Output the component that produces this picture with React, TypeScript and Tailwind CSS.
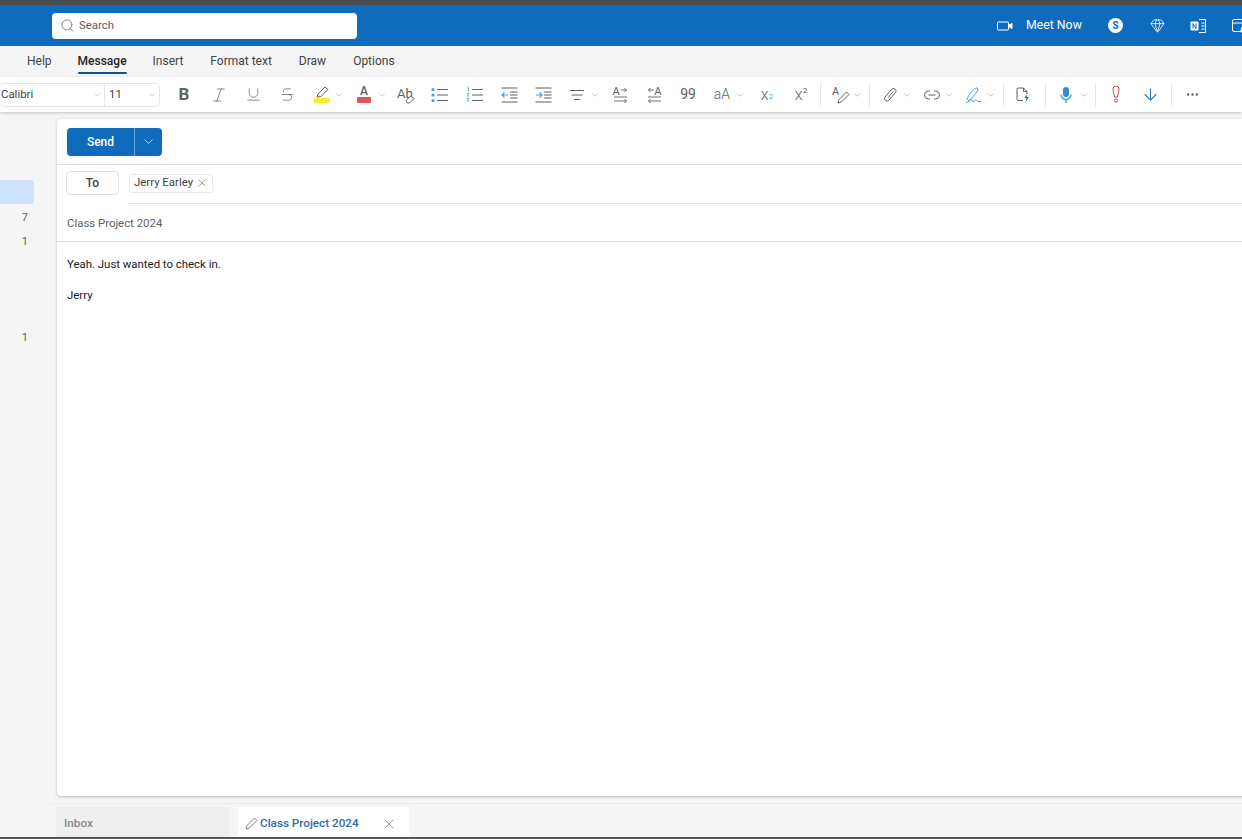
import type { ReactNode } from 'react';
import { ArrowDown, ChevronDown, Ellipsis, Gem, Italic, Search, Strikethrough, Underline, X } from 'lucide-react';

const GREY = '#616161';
const ACCENT = '#4f9fd4';

// one toolbar slot, the width and left margin come in through className
const Slot = ({ className, children }: { className: string; children: ReactNode }) => (
  <div className={`flex h-full shrink-0 items-center justify-center text-[#616161] ${className}`}>{children}</div>
);

const Chev = ({ className }: { className: string }) => (
  <Slot className={`w-[8px] ${className}`}>
    <ChevronDown size={10} strokeWidth={1.2} className="shrink-0 text-[#8a8a8a]" />
  </Slot>
);

const Divider = ({ className }: { className: string }) => (
  <div className={`h-[24px] w-px shrink-0 bg-[#e6e6e6] ${className}`} />
);

const BulletList = () => (
  <svg width="18" height="16" viewBox="0 0 18 16" fill="none">
    <circle cx="2" cy="2.5" r="1.6" fill={ACCENT} />
    <circle cx="2" cy="8" r="1.6" fill={ACCENT} />
    <circle cx="2" cy="13.5" r="1.6" fill={ACCENT} />
    <path d="M6 2.5h11M6 8h11M6 13.5h11" stroke={GREY} />
  </svg>
);

const NumberList = () => (
  <svg width="18" height="16" viewBox="0 0 18 16" fill="none">
    <path d="M1.5 1l1-.5V4M1 6.5h2L1 9h2.2M1 11.5h2l-1 1.2 1 1.2H1" stroke={ACCENT} strokeWidth="0.8" />
    <path d="M6 2.5h11M6 8h11M6 13.5h11" stroke={GREY} />
  </svg>
);

const Indent = ({ flip }: { flip?: boolean }) => (
  <svg width="17" height="16" viewBox="0 0 17 16" fill="none">
    <path d="M.5 1h16M.5 15h16M9 5h7.500M9 8h7.500M9 11h7.500" stroke={GREY} />
    <path d={flip ? 'M1 8h6M4.500 5.500 7 8l-2.500 2.500' : 'M7 8H1M3.500 5.500 1 8l2.500 2.500'} stroke={ACCENT} strokeWidth="1.2" />
  </svg>
);

const Spacing = () => (
  <svg width="16" height="12" viewBox="0 0 16 12" fill="none">
    <path d="M1 1.500h14M2.500 6h11M5 10.500h6" stroke={GREY} />
  </svg>
);

const Direction = ({ rtl }: { rtl?: boolean }) => (
  <div className="relative flex h-[16px] w-[15px] flex-col items-center">
    <span className={`text-[11px] leading-[10px] ${rtl ? 'self-end' : 'self-start'}`}>A</span>
    <svg width="15" height="16" viewBox="0 0 15 16" fill="none" className="absolute left-0 top-0">
      {rtl ? (
        <path d="M7 3H1.500M3.500 1 1.500 3l2 2M1 10h13M14 14H1.500M3.500 12l-2 2 2 2" stroke={GREY} strokeWidth="0.9" />
      ) : (
        <path d="M8 3h5.500M11.500 1l2 2-2 2M1 10h13M1 14h12.500M11.500 12l2 2-2 2" stroke={GREY} strokeWidth="0.9" />
      )}
    </svg>
  </div>
);

const Proof = () => (
  <div className="relative h-[18px] w-[18px]">
    <span className="text-[13px] leading-[15px]">Ab</span>
    <svg width="10" height="9" viewBox="0 0 10 9" fill="none" className="absolute bottom-0 right-0">
      <path d="M1 5.500 5.500 1 9 3.500 4.500 8H2.500z" stroke={GREY} fill="#fff" />
    </svg>
  </div>
);

const StylePen = () => (
  <div className="relative h-[18px] w-[18px]">
    <span className="block text-[11px] leading-[12px]">A</span>
    <svg width="13" height="13" viewBox="0 0 13 13" fill="none" className="absolute bottom-0 right-0">
      <path d="M1 12l1-3.500L9.500 1 12 3.500 4.500 11z" stroke={GREY} />
    </svg>
  </div>
);

const Clip = () => (
  <svg width="14" height="15" viewBox="0 0 14 15" fill="none">
    <path d="M5.500 10.500 10 4.500M3 9l5.500-6.500a2.500 2.500 0 0 1 4 3L6 13a2.500 2.500 0 0 1-4-3l1-1" stroke={GREY} />
  </svg>
);

const Signature = () => (
  <svg width="18" height="18" viewBox="0 0 18 18" fill="none">
    <path d="M2 14c0-3 6-11 9-12 2-.5 2.500 1.500 1 3.500-2 3-6 8-9 9.500M1 16.500c3 0 3-3 5-3 1.500 0 .5 2 2 2s2-1.500 3-1.500 1 1.500 3 1.500h2" stroke={ACCENT} />
  </svg>
);

const Flash = () => (
  <svg width="14" height="16" viewBox="0 0 14 16" fill="none">
    <path d="M7 13.500H2A1 1 0 0 1 1 12.500V2a1 1 0 0 1 1-1h5.500L11 4.500V7M7.500 1v3.500H11" stroke={GREY} />
    <path d="M11 7.500l-2.500 3.500H10.500l-1 4 3.500-5h-2.200z" fill="#0f6cbd" />
  </svg>
);

const Mic = () => (
  <svg width="14" height="18" viewBox="0 0 14 18" fill="none">
    <rect x="4" y="1" width="6" height="10" rx="3" fill="#2f8fd0" />
    <path d="M2 8.500a5 5 0 0 0 10 0M7 13.500V17" stroke="#2f8fd0" strokeWidth="1.2" />
  </svg>
);

const Important = () => (
  <svg width="10" height="18" viewBox="0 0 10 18" fill="none">
    <path d="M2 3a3 3 0 0 1 6 0c0 2-1 5-1.500 8h-3C3 8 2 5 2 3z" stroke="#c4474f" />
    <circle cx="5" cy="14.500" r="1.600" stroke="#c4474f" />
  </svg>
);

const Video = () => (
  <svg width="16" height="10" viewBox="0 0 16 10" fill="none" stroke="#fff">
    <rect x="0.500" y="1" width="11" height="8" rx="0.800" />
    <path d="M12 4l3-1.500v5L12 6z" fill="#fff" />
  </svg>
);

const OneNote = () => (
  <svg width="16" height="14" viewBox="0 0 16 14" fill="none">
    <rect x="0.500" y="2.500" width="8" height="9" rx="1" fill="#fff" />
    <path d="M3 9.500v-5l3 5v-5" stroke="#0f6cbd" />
    <path d="M9 .500h6.500v13H9M11.500 4h3M11.500 7h3M11.500 10h3" stroke="#fff" />
  </svg>
);

const CalendarCheck = () => (
  <svg width="16" height="16" viewBox="0 0 16 16" fill="none" stroke="#fff">
    <rect x="0.500" y="1.500" width="13" height="12" rx="1.500" />
    <path d="M0.500 5h13" />
    <circle cx="12.500" cy="12" r="3.500" fill="#fff" />
  </svg>
);

const MenuTab = ({ label, className, active }: { label: string; className: string; active?: boolean }) => (
  <div className={`relative flex h-full items-center whitespace-nowrap pb-[2px] ${className}`}>
    <span className={active ? 'font-medium text-[#242424]' : 'text-[#424242]'}>{label}</span>
    {active && <div className="absolute bottom-[3px] left-0 right-0 h-[2px] rounded-full bg-[#0f548c]" />}
  </div>
);

const Toolbar = () => (
  <div className="relative z-10 flex h-[35px] shrink-0 items-center bg-white shadow-[0_1px_3px_rgba(0,0,0,0.2)]">
    <div className="-ml-px flex h-[24px] w-[106px] shrink-0 items-center justify-between rounded-l-[4px] border border-[#e5e5e5] pl-[1px] pr-[1px]">
      <span className="text-[#424242]">Calibri</span>
      <ChevronDown size={10} strokeWidth={1.1} className="mr-[1px] text-[#9a9a9a]" />
    </div>
    <div className="-ml-px flex h-[24px] w-[56px] shrink-0 items-center justify-between rounded-r-[4px] border border-[#e5e5e5] pl-[4px] pr-[2px]">
      <span className="text-[#424242]">11</span>
      <ChevronDown size={10} strokeWidth={1.1} className="text-[#9a9a9a]" />
    </div>

    <Slot className="ml-[7px] w-[34px] text-[17px] font-bold">B</Slot>
    <Slot className="w-[35px]"><Italic size={18} strokeWidth={1} /></Slot>
    <Slot className="w-[34px]"><Underline size={17} strokeWidth={1} /></Slot>
    <Slot className="w-[34px]"><Strikethrough size={17} strokeWidth={1} /></Slot>
    <Slot className="ml-[5px] w-[26px]">
      <div className="flex flex-col items-center">
        <svg width="14" height="12" viewBox="0 0 14 12" fill="none">
          <path d="M2 11l1-3L10 1l3 2.500L6 10.500z" stroke={GREY} />
        </svg>
        <div className="h-[5px] w-[16px] rounded-[1px] bg-[#f4ee2e]" />
      </div>
    </Slot>
    <Chev className="" />
    <Slot className="ml-[7px] w-[28px]">
      <div className="flex flex-col items-center">
        <span className="text-[12px] font-medium leading-[11px]">A</span>
        <div className="h-[6px] w-[14px] rounded-[1px] bg-[#e0555a]" />
      </div>
    </Slot>
    <Chev className="" />
    <Slot className="ml-[3px] w-[34px]"><Proof /></Slot>
    <Slot className="w-[34px]"><BulletList /></Slot>
    <Slot className="w-[35px]"><NumberList /></Slot>
    <Slot className="w-[34px]"><Indent /></Slot>
    <Slot className="w-[34px]"><Indent flip /></Slot>
    <Slot className="ml-[4px] w-[26px]"><Spacing /></Slot>
    <Chev className="ml-px" />
    <Slot className="ml-[4px] w-[34px]"><Direction /></Slot>
    <Slot className="w-[34px]"><Direction rtl /></Slot>
    <Slot className="w-[34px] text-[14px]">99</Slot>
    <Slot className="ml-[4px] w-[26px] text-[14px] font-light">aA</Slot>
    <Chev className="ml-px" />
    <Slot className="ml-[6px] w-[34px] text-[16px] font-light leading-none">x<sub className="text-[8px] font-normal text-[#4f9fd4]">2</sub></Slot>
    <Slot className="w-[34px] text-[16px] font-light leading-none">x<sup className="text-[8px] font-normal">2</sup></Slot>
    <Divider className="ml-[2px]" />
    <Slot className="ml-[8px] w-[24px]"><StylePen /></Slot>
    <Chev className="" />
    <Divider className="ml-[8px]" />
    <Slot className="ml-[7px] w-[26px]"><Clip /></Slot>
    <Chev className="" />
    <Slot className="ml-[8px] w-[26px]">
      <svg width="16" height="10" viewBox="0 0 16 10" fill="none">
        <path d="M6 1H4.500a4 4 0 0 0 0 8H6M10 1h1.500a4 4 0 0 1 0 8H10M4.500 5h7" stroke={GREY} />
      </svg>
    </Slot>
    <Chev className="" />
    <Slot className="ml-[8px] w-[26px]"><Signature /></Slot>
    <Chev className="" />
    <Divider className="ml-[8px]" />
    <Slot className="ml-[2px] w-[34px]"><Flash /></Slot>
    <Divider className="ml-[5px]" />
    <Slot className="ml-[7px] w-[26px]"><Mic /></Slot>
    <Chev className="ml-px" />
    <Divider className="ml-[7px]" />
    <Slot className="ml-[3px] w-[34px]"><Important /></Slot>
    <Slot className="w-[34px]"><ArrowDown size={19} strokeWidth={1.4} className="text-[#2f7fc0]" /></Slot>
    <Divider className="ml-[4px]" />
    <Slot className="ml-[3px] w-[34px]"><Ellipsis size={15} strokeWidth={1.8} /></Slot>
  </div>
);

const App = () => {
  return (
    <div className="flex h-screen w-full flex-col overflow-hidden bg-[#f5f5f5] font-['Roboto',sans-serif] text-[11.400px] text-[#242424]">
      <div className="h-[5px] shrink-0 bg-[#4c4d50]" />

      <header className="flex h-[41px] shrink-0 items-center bg-[#0f6cbd] text-white">
        <div className="ml-[52px] flex h-[26px] w-[305px] shrink-0 items-center gap-[4px] rounded-[4px] bg-white pl-[8px] text-[#616161]">
          <Search size={15} strokeWidth={1.2} />
          <span>Search</span>
        </div>
        <div className="ml-[640px] flex w-[16px] shrink-0 justify-center"><Video /></div>
        <span className="ml-[13px] w-[56px] shrink-0 whitespace-nowrap text-[12.300px]">Meet Now</span>
        <div className="ml-[26px] flex h-[15px] w-[15px] shrink-0 items-center justify-center rounded-full bg-white text-[10px] font-bold leading-none text-[#0f6cbd]">S</div>
        <Gem size={15} strokeWidth={1.3} className="ml-[27px] shrink-0" />
        <div className="ml-[25px] shrink-0"><OneNote /></div>
        <div className="ml-[26px] shrink-0"><CalendarCheck /></div>
      </header>

      <nav className="flex h-[31px] shrink-0 items-center text-[12px]">
        <MenuTab label="Help" className="ml-[27px]" />
        <MenuTab label="Message" className="ml-[26px]" active />
        <MenuTab label="Insert" className="ml-[26px]" />
        <MenuTab label="Format text" className="ml-[27px]" />
        <MenuTab label="Draw" className="ml-[27px]" />
        <MenuTab label="Options" className="ml-[27px]" />
      </nav>

      <Toolbar />

      <div className="flex min-h-0 flex-1">
        <aside className="w-[57px] shrink-0 pt-[68px] text-[11px] text-[#616161]">
          <div className="h-[24px] w-[34px] rounded-r-[4px] bg-[#cfe4fa]" />
          <div className="mt-[2px] flex h-[24px] items-center justify-end pr-[29px]">7</div>
          <div className="flex h-[24px] items-center justify-end pr-[29px]">1</div>
          <div className="mt-[72px] flex h-[24px] items-center justify-end pr-[29px]">1</div>
        </aside>

        <div className="flex min-w-0 flex-1 flex-col">
          <main className="-mr-[12px] mt-[7px] flex min-h-0 flex-1 flex-col rounded-l-[4px] bg-white shadow-[0_1px_3px_rgba(0,0,0,0.25)]">
            <div className="flex h-[46px] shrink-0 items-center border-b border-[#e0e0e0] pl-[10px]">
              <div className="flex h-[28px] overflow-hidden rounded-[4px] bg-[#0f6cbd] text-[12px] text-white">
                <div className="flex w-[68px] items-center justify-center border-r border-[#6ba5d8] font-medium">Send</div>
                <div className="flex w-[27px] items-center justify-center"><ChevronDown size={15} strokeWidth={1.2} /></div>
              </div>
            </div>

            <div className="flex h-[38px] shrink-0 items-center pb-[2px] pl-[9px]">
              <div className="flex h-[24px] w-[53px] items-center justify-center rounded-[4px] border border-[#e0e0e0] text-[12px] font-medium text-[#424242]">To</div>
              <div className="ml-[10px] flex h-[19px] w-[84px] items-center justify-between rounded-[3px] border border-[#e8e8e8] pl-[4px] pr-[4px] text-[#424242]">
                <span className="whitespace-nowrap">Jerry Earley</span>
                <X size={12} strokeWidth={1} className="shrink-0" />
              </div>
            </div>
            <div className="ml-[70px] h-px shrink-0 bg-[#e6e6e6]" />

            <div className="flex h-[38px] shrink-0 items-center border-b border-[#e0e0e0] pl-[10px] pt-[3px] text-[#616161]">Class Project 2024</div>

            <div className="pl-[10px] pt-[13px] leading-[18px] text-[#1a1a1a]">
              <p>Yeah. Just wanted to check in.</p>
              <p className="mt-[13px]">Jerry</p>
            </div>
          </main>
        </div>
      </div>

      <footer className="shrink-0 text-[11.700px]">
        <div className="ml-[50px] mt-[7px] h-px bg-[#ebebeb]" />
        <div className="ml-[56px] mt-[3px] flex h-[30px] items-stretch">
          <div className="flex w-[174px] items-center bg-[#efefef] pl-[8px] pt-[3px] font-medium text-[#8a8a8a]">Inbox</div>
          <div className="ml-[8px] flex w-[171px] items-center bg-white pl-[7px] pt-[3px] font-medium text-[#2d6ca5]">
            <svg width="13" height="13" viewBox="0 0 13 13" fill="none" className="shrink-0">
              <path d="M1 12l1-3.500L9.500 1 12 3.500 4.500 11z" stroke="#7a7a7a" />
            </svg>
            <span className="ml-[2px] w-[99px] whitespace-nowrap">Class Project 2024</span>
            <X size={16} strokeWidth={1} className="ml-[22px] shrink-0 text-[#616161]" />
          </div>
        </div>
        <div className="h-[2px] bg-[#555]" />
      </footer>
    </div>
  );
};

export default App;
